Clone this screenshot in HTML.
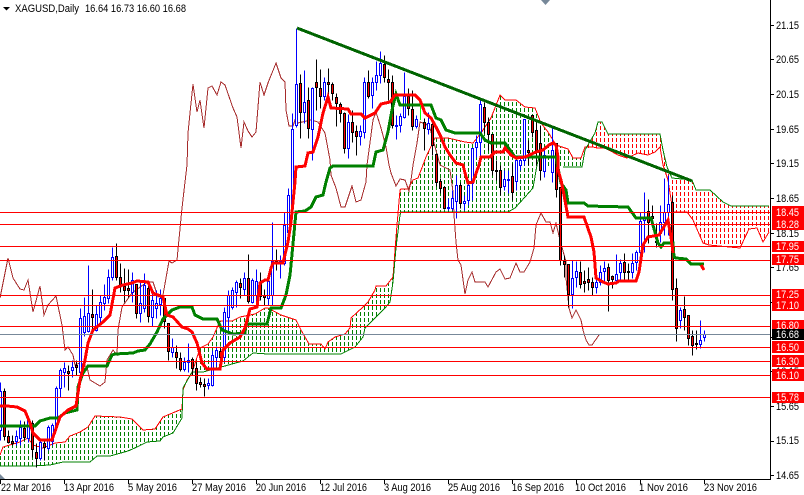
<!DOCTYPE html>
<html><head><meta charset="utf-8"><style>
html,body{margin:0;padding:0;background:#fff;width:804px;height:495px;overflow:hidden}
svg{display:block}
text{font-family:"Liberation Sans",sans-serif;font-size:11px;fill:#000}
.w{fill:#fff}
</style></head><body>
<svg width="804" height="495" viewBox="0 0 804 495" xmlns="http://www.w3.org/2000/svg">
<defs>
<pattern id="pg" patternUnits="userSpaceOnUse" width="4" height="6"><rect x="0" y="0" width="1" height="4" fill="#008000"/></pattern>
<pattern id="pr" patternUnits="userSpaceOnUse" width="4" height="6"><rect x="0" y="0" width="1" height="4" fill="#f00"/></pattern>
</defs>
<rect width="804" height="495" fill="#fff"/>
<!-- cloud fills -->
<polygon shape-rendering="crispEdges" fill="url(#pg)" points="0,455 3,447 20,442 28,438 33,445 43,448 55,443 65,442 70,436 80,432 88,427 95,416 120,417 132,419 143,430 155,429 163,417 182,409 183,390 187,380 192,373 200,348 208,344 213,337 220,321 232,321 240,317 255,314 265,308 268,308 281,315 296,320 301,330 309,344 321,344 325,349 328,342 335,337 345,334 350,328 351,318 363,307 368,302 375,290 376,286 386,286 393,277 396,237 400,190 401,189 408,189 413,180 418,178 423,165 426,157 435,138 448,138 465,142 473,143 481,133 491,118 500,95 505,100 516,100 525,107 535,108 541,123 548,132 556,145 568,149 573,158 581,158 584,158 584,167 563,167 537,165 533,188 525,197 515,208 508,212 401,212 400,215 396,248 393,282 390,302 385,308 373,320 365,328 363,337 355,347 341,354 268,354 253,353 243,361 203,372 192,372 183,388 182,418 173,433 163,437 160,441 147,442 137,447 128,451 110,456 97,456 90,462 63,462 50,465 33,466 0,466"/>
<polygon shape-rendering="crispEdges" fill="url(#pr)" points="585,150 595,133 598,122 602,122 608,134 660,134 663,150 667,167 672,178 692,180 696,190 710,190 723,202 731,206 769,206 769,232 763,242 757,228 749,229 740,248 709,245 703,243 693,220 687,212 673,212 668,180 663,165 660,147 655,152 648,155 638,153 627,158 618,155 605,148 597,148 593,147"/>
<!-- thin cloud edges -->
<g fill="none" stroke-width="1" shape-rendering="crispEdges">
<polyline stroke="#f00" points="0,455 3,447 20,442 28,438 33,445 43,448 55,443 65,442 70,436 80,432 88,427 95,416 120,417 132,419 143,430 155,429 163,417 182,409 183,390 187,380 192,373 200,348 208,344 213,337 220,321 232,321 240,317 255,314 265,308 268,308 281,315 296,320 301,330 309,344 321,344 325,349 328,342 335,337 345,334 350,328 351,318 363,307 368,302 375,290 376,286 386,286 393,277 396,237 400,190 401,189 408,189 413,180 418,178 423,165 426,157 435,138 448,138 465,142 473,143 481,133 491,118 500,95 505,100 516,100 525,107 535,108 541,123 548,132 556,145 568,149 573,158 581,158 585,147 593,147 597,148 605,148 618,155 627,158 638,153 648,155 655,152 660,147 663,165 668,180 673,212 687,212 693,220 703,243 709,245 740,248 749,229 757,228 763,242 769,232"/>
<polyline stroke="#008000" points="0,466 33,466 50,465 63,462 90,462 97,456 110,456 128,451 137,447 147,442 160,441 163,437 173,433 182,418 183,388 192,372 203,372 243,361 253,353 268,354 341,354 355,347 363,337 365,328 373,320 385,308 390,302 393,282 396,248 400,215 401,212 508,212 515,208 525,197 533,188 537,165 541,150"/>
<polyline stroke="#008000" points="563,167 582,167 585,150 595,133 598,122 602,122 608,134 660,134 663,150 667,167 672,178 692,180 696,190 710,190 723,202 731,206 769,206"/>
</g>
<!-- chikou -->
<polyline fill="none" stroke="#a52a2a" stroke-width="1" shape-rendering="crispEdges" points="0,298 8,258 13,278 20,289 24,290 28,280 33,312 40,286 44,315 48,305 56,296 62,325 65,350 68,347 73,355 75,365 80,363 87,367 90,380 100,386 105,382 107,360 113,350 117,355 118,330 122,307 132,293 147,282 153,282 158,297 163,295 169,261 172,263 177,260 182,208 185,182 187,165 188,133 190,113 193,84 197,112 200,100 204,128 208,88 212,86 217,95 221,82 225,85 233,108 237,117 241,148 244,122 248,131 252,137 256,132 260,82 264,95 268,83 276,63 281,78 285,82 286,110 289,126 293,126 296,117 298,123 311,120 318,122 325,133 330,160 331,175 336,188 341,207 345,207 352,186 356,202 361,200 366,182 367,165 373,120 376,112 381,128 386,147 389,165 391,173 396,186 400,179 405,180 409,191 411,180 413,165 417,143 420,122 426,124 430,128 434,143 440,165 450,170 453,192 454,215 456,242 458,260 461,265 465,294 468,280 472,272 475,282 485,282 488,287 496,272 500,269 505,279 510,278 516,263 520,272 524,272 530,262 534,248 536,225 538,220 541,213 546,222 550,222 553,233 556,223 560,240 566,262 566,278 569,308 572,318 576,310 581,320 583,330 586,340 589,345 592,345 599,335"/>
<!-- candles -->
<g transform="translate(.5 .5)" shape-rendering="crispEdges">
<path fill="none" stroke="#00f" d="M0 382V440M16 430V445M20 420V445M28 416V442M40 440V460M48 425V450M52 423V445M56 386V430M60 368V397M64 362V387M72 360V377M80 308V378M84 297V336M88 265V332M96 305V331M100 295V322M104 284V310M108 269V303M112 247V280M132 272V302M140 280V322M144 273V312M152 292V326M156 290V318M160 289V315M172 338V357M184 357V371M188 343V372M208 378V389M212 350V386M216 346V366M224 307V362M228 290V330M232 287V309M236 280V307M244 272V295M252 278V303M256 269V305M268 276V305M272 222V305M280 255V278M284 212V265M288 188V235M292 113V210M296 28V127M304 70V123M312 87V160M324 77V100M348 114V158M360 125V145M364 77V138M372 77V108M376 61V90M380 51V83M396 115V139M400 113V132M404 72V118M416 115V128M428 112V134M448 198V210M452 190V210M456 175V218M464 195V210M468 180V205M472 148V200M476 135V157M480 100V157M504 170V190M508 170V193M516 160V190M520 155V170M524 119V165M544 150V177M552 128V182M572 260V308M576 261V287M596 278V293M600 265V285M604 261V282M616 254V282M620 259V282M632 253V278M636 250V270M640 212V255M644 192V252M660 205V242M664 178V235M668 175V235M680 307V328M700 320V348M704 330V341"/>
<path fill="#fff" stroke="#00f" d="M-1 391h2V430h-2zM15 436h2V441h-2zM19 427h2V438h-2zM27 420h2V438h-2zM39 442h2V458h-2zM47 427h2V448h-2zM51 425h2V441h-2zM55 388h2V427h-2zM59 370h2V388h-2zM63 368h2V372h-2zM71 367h2V370h-2zM79 318h2V372h-2zM83 316h2V332h-2zM87 313h2V331h-2zM95 314h2V330h-2zM99 302h2V317h-2zM103 297h2V303h-2zM107 277h2V298h-2zM111 257h2V277h-2zM131 280h2V292h-2zM139 303h2V313h-2zM143 285h2V308h-2zM151 300h2V317h-2zM155 303h2V308h-2zM159 298h2V304h-2zM171 347h2V352h-2zM183 362h2V369h-2zM187 360h2V362h-2zM207 383h2V385h-2zM211 355h2V385h-2zM215 350h2V357h-2zM223 312h2V357h-2zM227 295h2V317h-2zM231 290h2V307h-2zM235 282h2V292h-2zM243 278h2V289h-2zM251 280h2V302h-2zM255 281h2V295h-2zM267 281h2V298h-2zM271 261h2V295h-2zM279 261h2V263h-2zM283 225h2V263h-2zM287 195h2V232h-2zM291 129h2V207h-2zM295 84h2V125h-2zM303 102h2V112h-2zM311 88h2V129h-2zM323 82h2V96h-2zM347 122h2V148h-2zM359 131h2V136h-2zM363 82h2V132h-2zM371 82h2V95h-2zM375 75h2V82h-2zM379 63h2V75h-2zM395 125h2V126h-2zM399 116h2V125h-2zM403 96h2V117h-2zM415 119h2V126h-2zM427 123h2V129h-2zM447 207h2V208h-2zM451 198h2V208h-2zM455 185h2V201h-2zM463 201h2V203h-2zM467 185h2V200h-2zM471 148h2V183h-2zM475 142h2V147h-2zM479 104h2V142h-2zM503 179h2V186h-2zM507 179h2V180h-2zM515 160h2V181h-2zM519 160h2V165h-2zM523 119h2V160h-2zM543 155h2V171h-2zM551 150h2V172h-2zM571 278h2V294h-2zM575 271h2V277h-2zM595 282h2V287h-2zM599 272h2V282h-2zM603 268h2V271h-2zM615 274h2V280h-2zM619 263h2V272h-2zM631 263h2V272h-2zM635 252h2V262h-2zM639 221h2V252h-2zM643 218h2V220h-2zM659 222h2V233h-2zM663 212h2V222h-2zM667 204h2V212h-2zM679 310h2V320h-2zM699 340h2V344h-2zM703 334h2V337h-2z"/>
<path fill="none" stroke="#000" d="M4 388V440M8 430V443M12 435V445M24 421V440M32 420V457M36 443V467M44 440V460M68 365V390M76 360V375M92 289V330M116 243V280M120 263V292M124 268V302M128 269V297M136 284V318M148 280V322M164 298V328M168 323V360M176 345V368M180 352V371M192 357V375M196 362V390M200 377V387M204 378V396M220 346V362M240 278V298M248 254V303M260 272V300M264 289V305M276 249V270M300 74V138M308 87V138M316 59V110M320 69V108M328 68V103M332 82V100M336 93V126M340 102V122M344 112V153M352 110V142M356 125V155M368 70V98M384 55V82M388 69V100M392 75V128M408 88V115M412 90V130M424 118V150M432 122V155M436 154V186M440 178V193M444 186V209M460 182V208M484 102V133M488 117V150M492 134V175M496 160V180M500 165V195M512 163V200M528 140V165M532 115V137M536 122V165M540 125V180M556 143V197M560 187V265M564 255V277M568 264V307M580 261V288M584 270V292M588 267V290M592 277V295M608 263V311M612 275V288M624 253V280M628 263V281M648 199V243M652 205V223M656 223V247M672 195V300M676 278V341M684 296V330M688 315V345M692 330V355M696 330V349"/>
<path fill="#f00" stroke="#000" d="M3 391h2V436h-2zM7 436h2V442h-2zM11 441h2V443h-2zM23 428h2V437h-2zM31 423h2V449h-2zM35 452h2V458h-2zM43 443h2V447h-2zM67 371h2V373h-2zM75 365h2V367h-2zM91 314h2V317h-2zM115 256h2V277h-2zM119 277h2V284h-2zM123 286h2V290h-2zM127 288h2V290h-2zM135 284h2V313h-2zM147 288h2V316h-2zM163 298h2V321h-2zM167 323h2V351h-2zM175 352h2V357h-2zM179 358h2V369h-2zM191 359h2V368h-2zM195 368h2V383h-2zM199 382h2V384h-2zM203 384h2V386h-2zM219 351h2V357h-2zM239 283h2V287h-2zM247 278h2V301h-2zM259 282h2V296h-2zM263 295h2V297h-2zM275 261h2V263h-2zM299 83h2V112h-2zM307 100h2V128h-2zM315 82h2V87h-2zM319 88h2V96h-2zM327 82h2V84h-2zM331 84h2V93h-2zM335 97h2V103h-2zM339 104h2V113h-2zM343 113h2V148h-2zM351 122h2V132h-2zM355 131h2V136h-2zM367 82h2V96h-2zM383 64h2V77h-2zM387 79h2V82h-2zM391 82h2V125h-2zM407 96h2V108h-2zM411 109h2V126h-2zM423 122h2V128h-2zM431 124h2V145h-2zM435 154h2V182h-2zM439 181h2V188h-2zM443 187h2V208h-2zM459 185h2V203h-2zM483 107h2V122h-2zM487 122h2V134h-2zM491 134h2V170h-2zM495 170h2V171h-2zM499 170h2V187h-2zM511 176h2V192h-2zM527 150h2V152h-2zM531 115h2V132h-2zM535 130h2V150h-2zM539 143h2V170h-2zM555 143h2V189h-2zM559 187h2V260h-2zM563 261h2V264h-2zM567 264h2V294h-2zM579 272h2V284h-2zM583 281h2V283h-2zM587 279h2V282h-2zM591 282h2V287h-2zM607 267h2V280h-2zM611 276h2V279h-2zM623 262h2V272h-2zM627 271h2V272h-2zM647 211h2V222h-2zM651 216h2V218h-2zM655 241h2V242h-2zM671 202h2V289h-2zM675 288h2V328h-2zM683 309h2V317h-2zM687 315h2V338h-2zM691 336h2V345h-2zM695 343h2V344h-2z"/>
</g>
<!-- kijun -->
<polyline fill="none" stroke="#008000" stroke-width="3" shape-rendering="crispEdges" points="0,426 35,426 40,421 50,418 58,418 65,413 77,410 78,387 83,373 88,366 107,366 112,355 115,354 133,353 138,351 145,350 150,344 157,332 163,319 172,310 180,307 192,307 195,315 203,319 217,319 222,330 233,334 245,333 246,324 267,324 271,308 281,308 286,295 290,275 291,265 296,212 305,211 311,207 316,197 323,195 326,182 330,168 333,166 373,166 376,152 383,150 388,132 392,110 396,94 400,105 431,105 436,118 441,120 446,130 455,133 480,133 485,140 491,143 505,143 515,157 556,157 558,168 561,183 566,190 568,203 584,203 588,206 628,207 636,218 651,218 658,243 661,247 664,243 673,243 674,257 676,258 686,259 691,264 704,264"/>
<!-- tenkan -->
<polyline fill="none" stroke="#f00" stroke-width="3" shape-rendering="crispEdges" points="0,406 7,406 17,407 25,411 30,423 33,433 40,440 52,440 60,417 68,410 76,406 80,380 85,360 88,343 93,330 103,322 110,315 115,288 123,285 132,283 137,281 148,282 153,293 163,297 167,315 173,317 182,327 188,329 192,332 197,343 202,363 207,369 220,369 223,350 230,343 240,337 245,328 250,309 257,307 260,283 265,280 268,280 271,268 273,263 283,263 288,242 291,222 295,182 296,167 305,166 308,153 313,152 318,137 323,113 328,97 331,108 348,109 351,114 361,114 365,118 375,113 381,104 390,102 395,95 415,95 420,100 425,113 431,118 436,127 441,137 445,147 450,155 456,163 463,165 465,173 468,183 473,182 479,165 481,157 490,157 495,152 503,152 505,148 511,155 516,158 525,157 536,152 543,150 549,145 553,143 556,145 558,157 558,170 561,180 564,195 568,217 584,217 591,237 594,252 596,278 603,282 608,284 616,283 619,281 636,281 639,272 643,245 648,237 659,235 668,220 671,237 673,253"/>
<polyline fill="none" stroke="#f00" stroke-width="3" shape-rendering="crispEdges" points="701,265 704,270"/>
<!-- lime segment -->
<path d="M420.5 105V120" stroke="#0f0" stroke-width="1" fill="none"/>
<!-- trend line -->
<line x1="297" y1="28" x2="692" y2="181" stroke="#006400" stroke-width="3" shape-rendering="crispEdges"/>
<!-- horizontals -->
<path d="M0 212.5H770M0 224.5H770M0 246.5H770M0 260.5H770M0 295.5H770M0 305.5H770M0 326.5H770M0 347.5H770M0 361.5H770M0 375.5H770M0 397.5H770" stroke="#f00" stroke-width="1" fill="none"/>
<path d="M0 334.5H770" stroke="#778899" stroke-width="1" fill="none"/>
<!-- axes -->
<path d="M770.5 0V479M0 479.5H771" stroke="#000" stroke-width="1" fill="none"/>
<path d="M771 25.5h3M771 59.5h3M771 94.5h3M771 129.5h3M771 163.5h3M771 198.5h3M771 233.5h3M771 267.5h3M771 302.5h3M771 337.5h3M771 371.5h3M771 406.5h3M771 441.5h3M771 475.5h3" stroke="#000" fill="none"/>
<path d="M.5 480V484M64.5 480V484M128.5 480V484M192.5 480V484M256.5 480V484M320.5 480V484M384.5 480V484M448.5 480V484M512.5 480V484M576.5 480V484M640.5 480V484M704.5 480V484" stroke="#000" fill="none"/>
<!-- icons -->
<polygon points="3,7 10,7 6.5,10.5" fill="#000"/>
<polygon points="541,0 550,0 545.5,5" fill="#778899"/>
<polygon points="0,474 5,479 0,479" fill="#778899"/>
<!-- header -->
<text x="15" y="12" textLength="64" lengthAdjust="spacingAndGlyphs">XAGUSD,Daily</text>
<text x="85" y="12" textLength="101" lengthAdjust="spacingAndGlyphs">16.64 16.73 16.60 16.68</text>
<!-- price axis -->
<g>
<text x="776" y="29" textLength="23" lengthAdjust="spacingAndGlyphs">21.15</text>
<text x="776" y="63" textLength="23" lengthAdjust="spacingAndGlyphs">20.65</text>
<text x="776" y="98" textLength="23" lengthAdjust="spacingAndGlyphs">20.15</text>
<text x="776" y="133" textLength="23" lengthAdjust="spacingAndGlyphs">19.65</text>
<text x="776" y="167" textLength="23" lengthAdjust="spacingAndGlyphs">19.15</text>
<text x="776" y="202" textLength="23" lengthAdjust="spacingAndGlyphs">18.65</text>
<text x="776" y="237" textLength="23" lengthAdjust="spacingAndGlyphs">18.15</text>
<text x="776" y="271" textLength="23" lengthAdjust="spacingAndGlyphs">17.65</text>
<text x="776" y="306" textLength="23" lengthAdjust="spacingAndGlyphs">17.15</text>
<text x="776" y="375" textLength="23" lengthAdjust="spacingAndGlyphs">16.15</text>
<text x="776" y="410" textLength="23" lengthAdjust="spacingAndGlyphs">15.65</text>
<text x="776" y="444" textLength="23" lengthAdjust="spacingAndGlyphs">15.15</text>
<text x="776" y="479" textLength="23" lengthAdjust="spacingAndGlyphs">14.65</text>
</g>
<g fill="#f00">
<rect x="772" y="206" width="32" height="12"/>
<rect x="772" y="218" width="32" height="12"/>
<rect x="772" y="241" width="32" height="11"/>
<rect x="772" y="254" width="32" height="11"/>
<rect x="772" y="289" width="32" height="11"/>
<rect x="772" y="299" width="32" height="12"/>
<rect x="772" y="320" width="32" height="11"/>
<rect x="772" y="341" width="32" height="12"/>
<rect x="772" y="355" width="32" height="12"/>
<rect x="772" y="369" width="32" height="12"/>
<rect x="772" y="392" width="32" height="11"/>
</g>
<rect x="772" y="329" width="32" height="11" fill="#000"/>
<g>
<text class="w" x="776" y="216" textLength="23" lengthAdjust="spacingAndGlyphs">18.45</text>
<text class="w" x="776" y="228" textLength="23" lengthAdjust="spacingAndGlyphs">18.28</text>
<text class="w" x="776" y="250" textLength="23" lengthAdjust="spacingAndGlyphs">17.95</text>
<text class="w" x="776" y="263" textLength="23" lengthAdjust="spacingAndGlyphs">17.75</text>
<text class="w" x="776" y="298" textLength="23" lengthAdjust="spacingAndGlyphs">17.25</text>
<text class="w" x="776" y="309" textLength="23" lengthAdjust="spacingAndGlyphs">17.10</text>
<text class="w" x="776" y="329" textLength="23" lengthAdjust="spacingAndGlyphs">16.80</text>
<text class="w" x="776" y="338" textLength="23" lengthAdjust="spacingAndGlyphs">16.68</text>
<text class="w" x="776" y="351" textLength="23" lengthAdjust="spacingAndGlyphs">16.50</text>
<text class="w" x="776" y="365" textLength="23" lengthAdjust="spacingAndGlyphs">16.30</text>
<text class="w" x="776" y="379" textLength="23" lengthAdjust="spacingAndGlyphs">16.10</text>
<text class="w" x="776" y="401" textLength="23" lengthAdjust="spacingAndGlyphs">15.78</text>
</g>
<!-- time axis -->
<g>
<text x="1" y="491" textLength="50" lengthAdjust="spacingAndGlyphs">22 Mar 2016</text>
<text x="64" y="491" textLength="50" lengthAdjust="spacingAndGlyphs">13 Apr 2016</text>
<text x="128" y="491" textLength="49" lengthAdjust="spacingAndGlyphs">5 May 2016</text>
<text x="192" y="491" textLength="54" lengthAdjust="spacingAndGlyphs">27 May 2016</text>
<text x="256" y="491" textLength="50" lengthAdjust="spacingAndGlyphs">20 Jun 2016</text>
<text x="320" y="491" textLength="47" lengthAdjust="spacingAndGlyphs">12 Jul 2016</text>
<text x="384" y="491" textLength="47" lengthAdjust="spacingAndGlyphs">3 Aug 2016</text>
<text x="448" y="491" textLength="52" lengthAdjust="spacingAndGlyphs">25 Aug 2016</text>
<text x="512" y="491" textLength="52" lengthAdjust="spacingAndGlyphs">16 Sep 2016</text>
<text x="575" y="491" textLength="51" lengthAdjust="spacingAndGlyphs">10 Oct 2016</text>
<text x="639" y="491" textLength="49" lengthAdjust="spacingAndGlyphs">1 Nov 2016</text>
<text x="704" y="491" textLength="53" lengthAdjust="spacingAndGlyphs">23 Nov 2016</text>
</g>
</svg>
</body></html>
